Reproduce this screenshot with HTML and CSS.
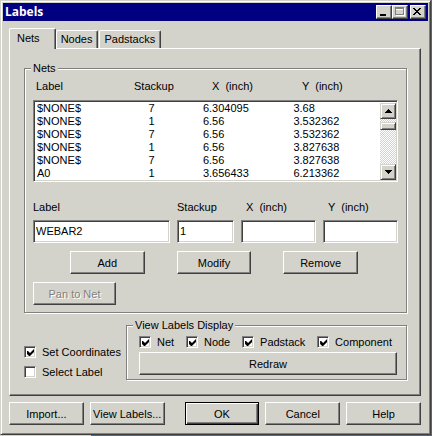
FILE: index.html
```html
<!DOCTYPE html>
<html lang="en">
<head>
<meta charset="utf-8">
<title>Labels</title>
<link rel="stylesheet" href="styles.css">
</head>
<body>
<main class="window">
  <header class="titlebar">
    <h1 class="title">Labels</h1>
    <button class="caption" type="button" aria-label="Minimize"><svg width="12" height="10" shape-rendering="crispEdges"><path d="M3 8h6v2H3z"/></svg></button>
    <button class="caption" type="button" aria-label="Maximize" disabled><svg width="12" height="10" shape-rendering="crispEdges"><path fill="#fff" d="M3 2h9v8H3z"/><path fill="#808080" d="M2 1h9v8H2z"/><path fill="#d4d3cb" d="M3 3h7v5H3z"/><path fill="#fff" d="M3 3h7v1H3z"/></svg></button>
    <button class="caption caption-close" type="button" aria-label="Close"><svg width="12" height="10" shape-rendering="crispEdges"><path d="M2 2h2v1h1v1h2v-1h1v-1h2v1h-1v1h-1v1h-1v1h1v1h1v1h1v1h-2v-1h-1v-1h-2v1h-1v1h-2v-1h1v-1h1v-1h1v-1h-1v-1h-1v-1h-1z"/></svg></button>
  </header>

  <nav class="tabs" role="tablist">
    <button class="tab tab-active" type="button" role="tab" aria-selected="true">Nets</button>
    <button class="tab" type="button" role="tab">Nodes</button>
    <button class="tab" type="button" role="tab">Padstacks</button>
  </nav>

  <section class="page">
    <fieldset class="group nets">
      <legend>Nets</legend>
      <div class="listbox">
        <table class="list">
          <thead>
            <tr><th>Label</th><th>Stackup</th><th>X  (inch)</th><th>Y  (inch)</th></tr>
          </thead>
          <tbody>
            <tr><td>$NONE$</td><td>7</td><td>6.304095</td><td>3.68</td></tr>
            <tr><td>$NONE$</td><td>1</td><td>6.56</td><td>3.532362</td></tr>
            <tr><td>$NONE$</td><td>7</td><td>6.56</td><td>3.532362</td></tr>
            <tr><td>$NONE$</td><td>1</td><td>6.56</td><td>3.827638</td></tr>
            <tr><td>$NONE$</td><td>7</td><td>6.56</td><td>3.827638</td></tr>
            <tr><td>A0</td><td>1</td><td>3.656433</td><td>6.213362</td></tr>
          </tbody>
        </table>
        <div class="scrollbar">
          <button class="arrow" type="button" aria-label="Scroll up"><svg width="7" height="4" shape-rendering="crispEdges"><path d="M3 0h1v1h1v1h1v1h1v1H0v-1h1v-1h1v-1h1z"/></svg></button>
          <div class="thumb"></div>
          <button class="arrow arrow-down" type="button" aria-label="Scroll down"><svg width="7" height="4" shape-rendering="crispEdges"><path d="M0 0h7v1h-1v1h-1v1h-1v1h-1v-1h-1v-1h-1v-1h-1z"/></svg></button>
        </div>
      </div>
      <div class="fields">
        <label for="label">Label</label>
        <label for="stackup">Stackup</label>
        <label class="indent" for="x">X  (inch)</label>
        <label class="indent" for="y">Y  (inch)</label>
        <input class="text" id="label" type="text" value="WEBAR2">
        <input class="text" id="stackup" type="text" value="1">
        <input class="text" id="x" type="text">
        <input class="text" id="y" type="text">
      </div>
      <div class="edit">
        <button class="button" type="button">Add</button>
        <button class="button" type="button">Modify</button>
        <button class="button" type="button">Remove</button>
      </div>
      <button class="button pan" type="button" disabled>Pan to Net</button>
    </fieldset>

    <div class="options">
      <div class="toggles">
        <label class="check"><input type="checkbox" checked>Set Coordinates</label>
        <label class="check"><input type="checkbox">Select Label</label>
      </div>
      <fieldset class="group display">
        <legend>View Labels Display</legend>
        <div class="checks">
          <label class="check"><input type="checkbox" checked>Net</label>
          <label class="check"><input type="checkbox" checked>Node</label>
          <label class="check"><input type="checkbox" checked>Padstack</label>
          <label class="check"><input type="checkbox" checked>Component</label>
        </div>
        <button class="button" type="button">Redraw</button>
      </fieldset>
    </div>
  </section>

  <footer class="actions">
    <button class="button" type="button">Import...</button>
    <button class="button" type="button">View Labels...</button>
    <button class="button default" type="button">OK</button>
    <button class="button" type="button">Cancel</button>
    <button class="button" type="button">Help</button>
  </footer>
</main>
</body>
</html>
```

FILE: styles.css
```css
:root {
  --face: #d4d3cb;
  --shade: #808080;
  --dark: #404040;
  --text: 11px/16px "Liberation Sans", Arial, sans-serif;
}

* { box-sizing: border-box; }

body {
  margin: 0;
  padding: 0 1px 1px 0;
  background: linear-gradient(90deg, var(--face) 91px, #3a6ea5 91px);
  font: var(--text);
  color: #000;
}

button, input { font: inherit; color: inherit; border-radius: 0; }

.window {
  background: var(--face);
  border: 1px solid;
  border-color: var(--face) var(--dark) var(--dark) var(--face);
  box-shadow: inset 1px 1px #fff, inset -1px -1px var(--shade);
  padding: 2px 2px 9px;
}

.titlebar {
  display: flex;
  align-items: center;
  height: 18px;
  padding: 0 2px;
  background: #000080;
}

.title {
  flex: 1;
  margin: 0;
  color: #fff;
  font: bold 12px/18px "Open Sans", "Noto Sans", sans-serif;
}

.caption {
  display: flex;
  width: 16px;
  height: 14px;
  padding: 1px;
  background: var(--face);
  border: 1px solid;
  border-color: #fff var(--dark) var(--dark) #fff;
  box-shadow: inset -1px -1px var(--shade);
}

.caption svg { flex: none; margin: -1px 0 0 -1px; }

.caption-close { margin-left: 2px; }

.tabs {
  display: flex;
  align-items: flex-end;
  padding: 7px 6px 0;
}

.tab {
  height: 18px;
  margin-right: 1px;
  padding: 0 5px 0 4px;
  background: var(--face);
  border: solid;
  border-width: 1px 1px 0;
  border-color: #fff var(--dark) #fff #fff;
  border-radius: 2px 2px 0 0;
  box-shadow: inset -1px 0 var(--shade);
  line-height: 17px;
}

.tab-active {
  position: relative;
  height: 21px;
  margin: 0 0 -1px;
  padding: 0 15px 2px 7px;
}

.page {
  margin: 0 7px 0 6px;
  padding: 11px 13px 15px 14px;
  border: 1px solid;
  border-color: #fff var(--dark) var(--dark) #fff;
  box-shadow: inset -1px -1px var(--shade);
}

.group {
  min-width: 0;
  margin: 0;
  border: 1px solid var(--shade);
  box-shadow: 1px 1px #fff, inset 1px 1px #fff;
}

.group legend {
  padding: 0 2px;
  background: var(--face);
}

.nets { padding: 2px 8px 7px; }

.nets legend { margin-left: -2px; }

.listbox { position: relative; }

.list, .list thead, .list tbody { display: block; }

.list tr {
  display: grid;
  grid-template-columns: 111fr 54fr 90fr 102fr;
}

.list thead tr {
  grid-template-columns: 98fr 78fr 90fr 96fr;
  padding: 0 0 6px 3px;
}

.list th, .list td {
  padding: 0;
  font-weight: normal;
  text-align: left;
  white-space: pre;
}

.list td { line-height: 13px; }

.list tbody, .text {
  background: #fff;
  border: 1px solid;
  border-color: var(--shade) #fff #fff var(--shade);
  box-shadow: inset 1px 1px var(--dark), inset -1px -1px var(--face);
}

.list tbody { padding: 1px 1px 1px 3px; }

.scrollbar {
  position: absolute;
  right: 2px;
  bottom: 2px;
  width: 16px;
  height: 77px;
  display: flex;
  flex-direction: column;
  background: repeating-conic-gradient(#fff 0 25%, var(--face) 0 50%) 0 0 / 2px 2px;
}

.arrow, .thumb {
  background: var(--face);
  border: 1px solid;
  border-color: var(--face) var(--dark) var(--dark) var(--face);
  box-shadow: inset 1px 1px #fff, inset -1px -1px var(--shade);
}

.arrow {
  display: flex;
  align-items: center;
  justify-content: center;
  height: 16px;
  padding: 0;
}

.thumb { height: 8px; margin-top: 3px; }

.arrow-down { margin-top: auto; }

.fields {
  display: grid;
  grid-template-columns: 137fr 57fr 75fr 75fr;
  gap: 5px 7px;
  margin-top: 17px;
  white-space: pre;
}

.indent { padding-left: 5px; }

.text {
  width: 100%;
  min-width: 0;
  height: 23px;
  padding: 0 2px 2px;
  outline: 0;
}

.button {
  height: 23px;
  padding: 0 2px;
  background: var(--face);
  border: 1px solid;
  border-color: #fff var(--dark) var(--dark) #fff;
  box-shadow: inset -1px -1px var(--shade);
  text-align: center;
  white-space: nowrap;
}

.button:disabled { color: var(--shade); text-shadow: 1px 1px #fff; }

.edit {
  display: grid;
  grid-template-columns: repeat(3, 75fr);
  gap: 32px;
  margin: 8px 40px 8px 37px;
}

.pan { width: 83px; }

.options {
  display: flex;
  align-items: flex-end;
  gap: 9px;
  margin-top: 4px;
}

.toggles {
  display: grid;
  gap: 4px;
  width: 93px;
}

.display {
  flex: 1;
  padding: 1px 9px 4px 12px;
}

.display legend { margin-left: -6px; }

.display .button { width: 100%; margin-top: 2px; display: block; }

.checks { display: flex; justify-content: space-between; padding-right: 5px; }

.check {
  display: flex;
  align-items: center;
  gap: 6px;
  white-space: nowrap;
}

.check input {
  appearance: none;
  flex: none;
  width: 12px;
  height: 12px;
  margin: 0;
  background: #fff;
  border: 1px solid;
  border-color: var(--shade) #fff #fff var(--shade);
  box-shadow: inset 1px 1px var(--dark), inset -1px -1px var(--face);
}

.check input:checked::before {
  content: "";
  display: block;
  width: 7px;
  height: 7px;
  margin: 2px;
  background: #000;
  clip-path: polygon(0 2px, 1px 2px, 3px 4px, 7px 0, 7px 3px, 3px 7px, 2px 7px, 0 5px);
}

.actions {
  display: grid;
  grid-template-columns: repeat(2, 75fr) 8px repeat(3, 75fr);
  gap: 6px;
  margin: 6px 7px 0 6px;
}

.default {
  grid-column: 4;
  border-color: #000;
  box-shadow: inset 1px 1px #fff, inset -1px -1px var(--dark), inset -2px -2px var(--shade);
}
```
